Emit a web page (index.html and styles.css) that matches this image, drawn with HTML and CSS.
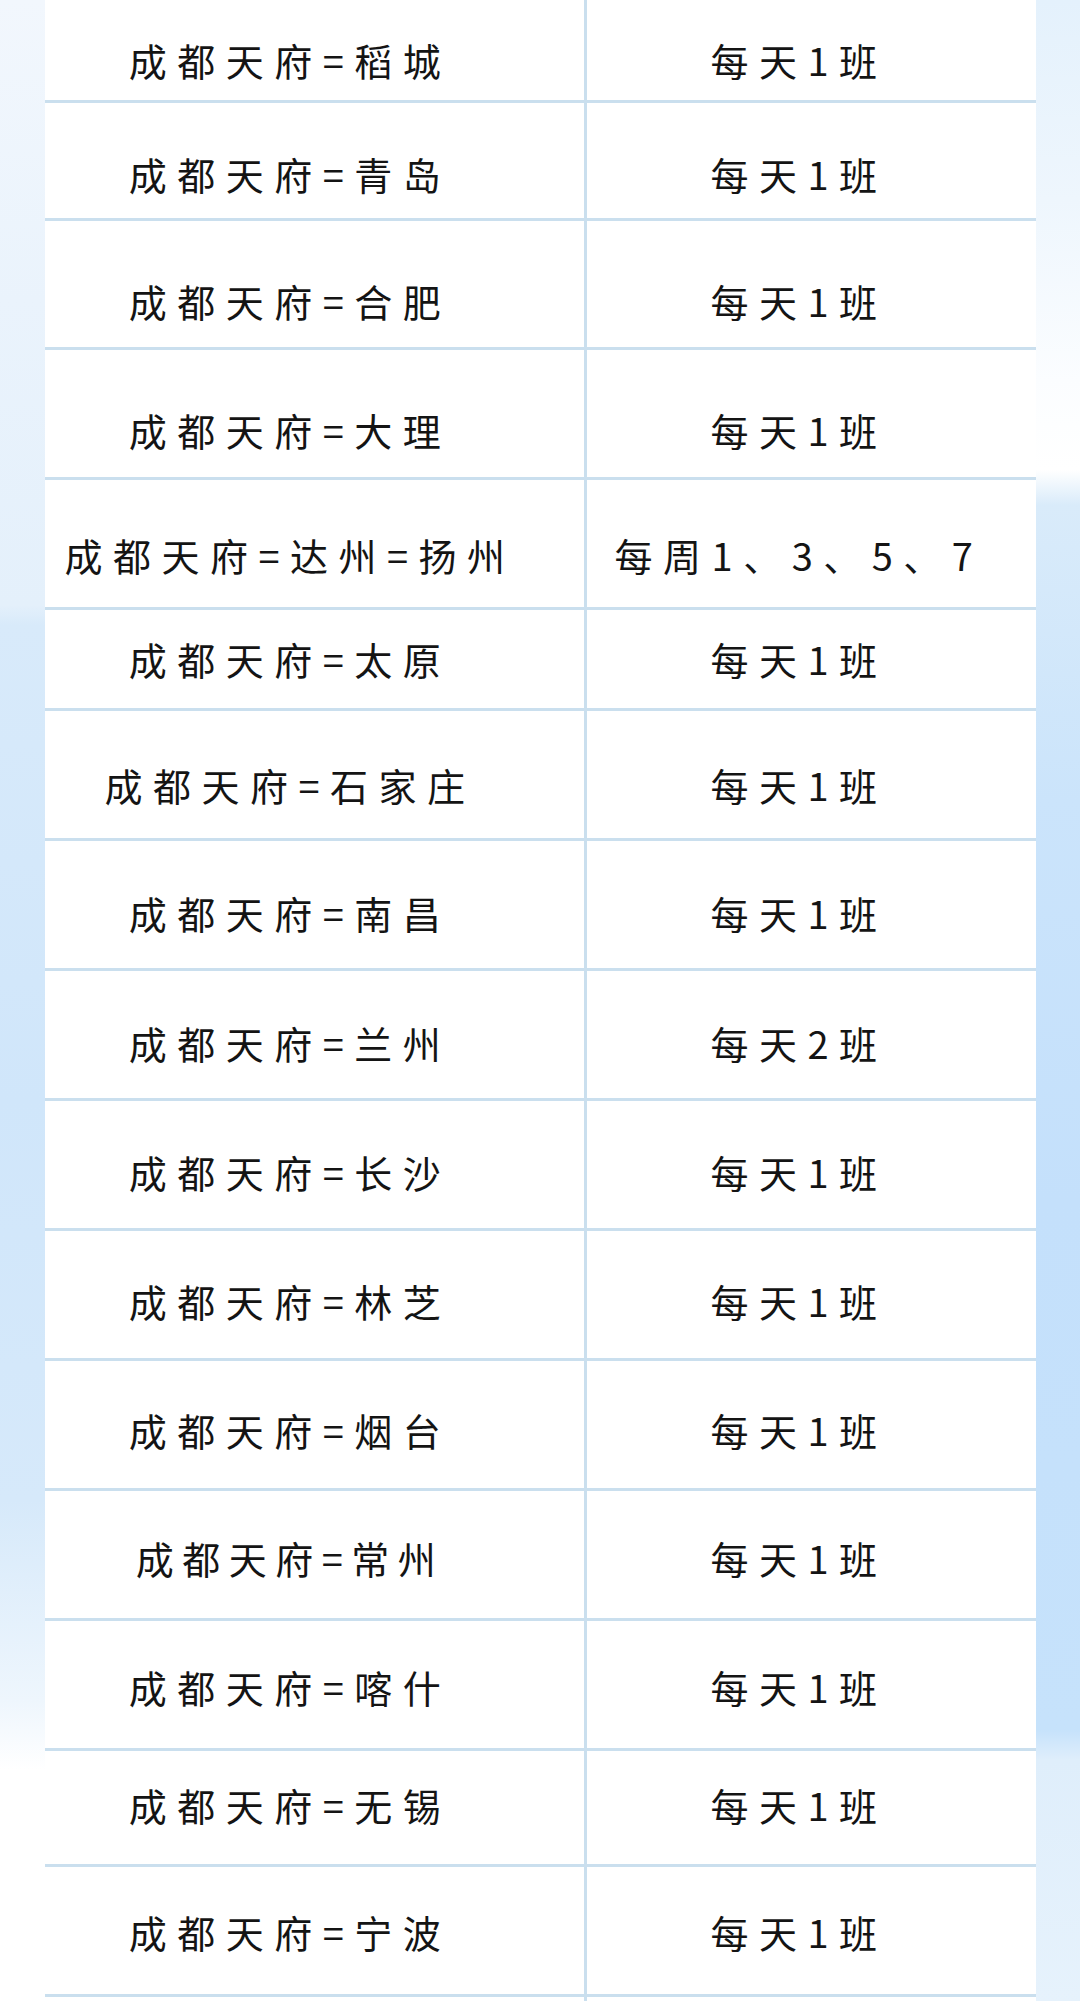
FILE: index.html
```html
<!DOCTYPE html>
<html lang="zh-CN">
<head>
<meta charset="utf-8">
<title>成都天府航线</title>
<link rel="stylesheet" href="styles.css">
</head>
<body>
<div class="page">
  <div class="table">
    <div class="row h103 p20"><div class="cell from">成都天府=稻城</div><div class="cell freq">每天1班</div></div>
    <div class="row h118 p26"><div class="cell from">成都天府=青岛</div><div class="cell freq">每天1班</div></div>
    <div class="row h129 p34"><div class="cell from">成都天府=合肥</div><div class="cell freq">每天1班</div></div>
    <div class="row h130 p32"><div class="cell from">成都天府=大理</div><div class="cell freq">每天1班</div></div>
    <div class="row h130 p22"><div class="cell from">成都天府=达州=扬州</div><div class="cell freq">每周1、3、5、7</div></div>
    <div class="row h101 p0"><div class="cell from">成都天府=太原</div><div class="cell freq">每天1班</div></div>
    <div class="row h130 p20"><div class="cell from">成都天府=石家庄</div><div class="cell freq">每天1班</div></div>
    <div class="row h130 p17"><div class="cell from">成都天府=南昌</div><div class="cell freq">每天1班</div></div>
    <div class="row h130 p17"><div class="cell from">成都天府=兰州</div><div class="cell freq">每天2班</div></div>
    <div class="row h130 p14"><div class="cell from">成都天府=长沙</div><div class="cell freq">每天1班</div></div>
    <div class="row h130 p12"><div class="cell from">成都天府=林芝</div><div class="cell freq">每天1班</div></div>
    <div class="row h130 p10"><div class="cell from">成都天府=烟台</div><div class="cell freq">每天1班</div></div>
    <div class="row h130 p6"><div class="cell from tight">成都天府=常州</div><div class="cell freq">每天1班</div></div>
    <div class="row h130 p4"><div class="cell from">成都天府=喀什</div><div class="cell freq">每天1班</div></div>
    <div class="row h116 up6"><div class="cell from">成都天府=无锡</div><div class="cell freq">每天1班</div></div>
    <div class="row h130 p2"><div class="cell from">成都天府=宁波</div><div class="cell freq">每天1班</div></div>
    <div class="row tail"><div class="cell from"></div><div class="cell freq"></div></div>
  </div>
</div>
</body>
</html>
```
FILE: styles.css
```css
html, body {
  margin: 0;
  padding: 0;
  background: #ffffff;
}

.page {
  width: 1080px;
  height: 2001px;
  overflow: hidden;
  background:
    linear-gradient(to bottom, #f2f7fd 0, #eaf3fc 300px, #e4f0fb 605px, #d8eafa 625px, #d0e6fa 1100px, #d6e9fa 1500px, #eef6fd 1700px, #ffffff 1770px, #ffffff 2001px) left top / 46px 100% no-repeat,
    linear-gradient(to bottom, #e4f1fc 0, #eef6fd 200px, #fbfdff 380px, #ffffff 470px, #d9ebfa 505px, #cbe4fb 800px, #c4e0fb 1200px, #c6e2fb 1730px, #dfeefb 1760px, #e6f2fc 2001px) right top / 62px 100% no-repeat,
    #ffffff;
  font-family: "Noto Sans CJK SC", "Noto Sans", sans-serif;
  color: #141414;
}

.table {
  margin-left: 45px;
  width: 991px;
  background: #ffffff;
}

.row {
  display: grid;
  grid-template-columns: 542px 449px;
  box-sizing: border-box;
  border-bottom: 3px solid #cadfee;
}

.cell {
  display: flex;
  align-items: center;
  justify-content: center;
  box-sizing: border-box;
  font-size: 38px;
  font-weight: 400;
  line-height: 38px;
  letter-spacing: 10.5px;
  white-space: nowrap;
}

.from {
  border-right: 3px solid #cadfee;
  padding-right: 49px;
}

.freq {
  padding-right: 25px;
}

.tight {
  letter-spacing: 8.5px;
}

.h101 { height: 101px; }
.h103 { height: 103px; }
.h116 { height: 116px; }
.h118 { height: 118px; }
.h129 { height: 129px; }
.h130 { height: 130px; }

.p0 .cell { padding-top: 0; }
.p2 .cell { padding-top: 2px; }
.p4 .cell { padding-top: 4px; }
.p6 .cell { padding-top: 6px; }
.p10 .cell { padding-top: 10px; }
.p12 .cell { padding-top: 12px; }
.p14 .cell { padding-top: 14px; }
.p17 .cell { padding-top: 17px; }
.p20 .cell { padding-top: 20px; }
.p22 .cell { padding-top: 22px; }
.p26 .cell { padding-top: 26px; }
.p32 .cell { padding-top: 32px; }
.p34 .cell { padding-top: 34px; }
.up6 .cell { padding-bottom: 6px; }

.tail {
  height: 20px;
  border-bottom: none;
}
```
